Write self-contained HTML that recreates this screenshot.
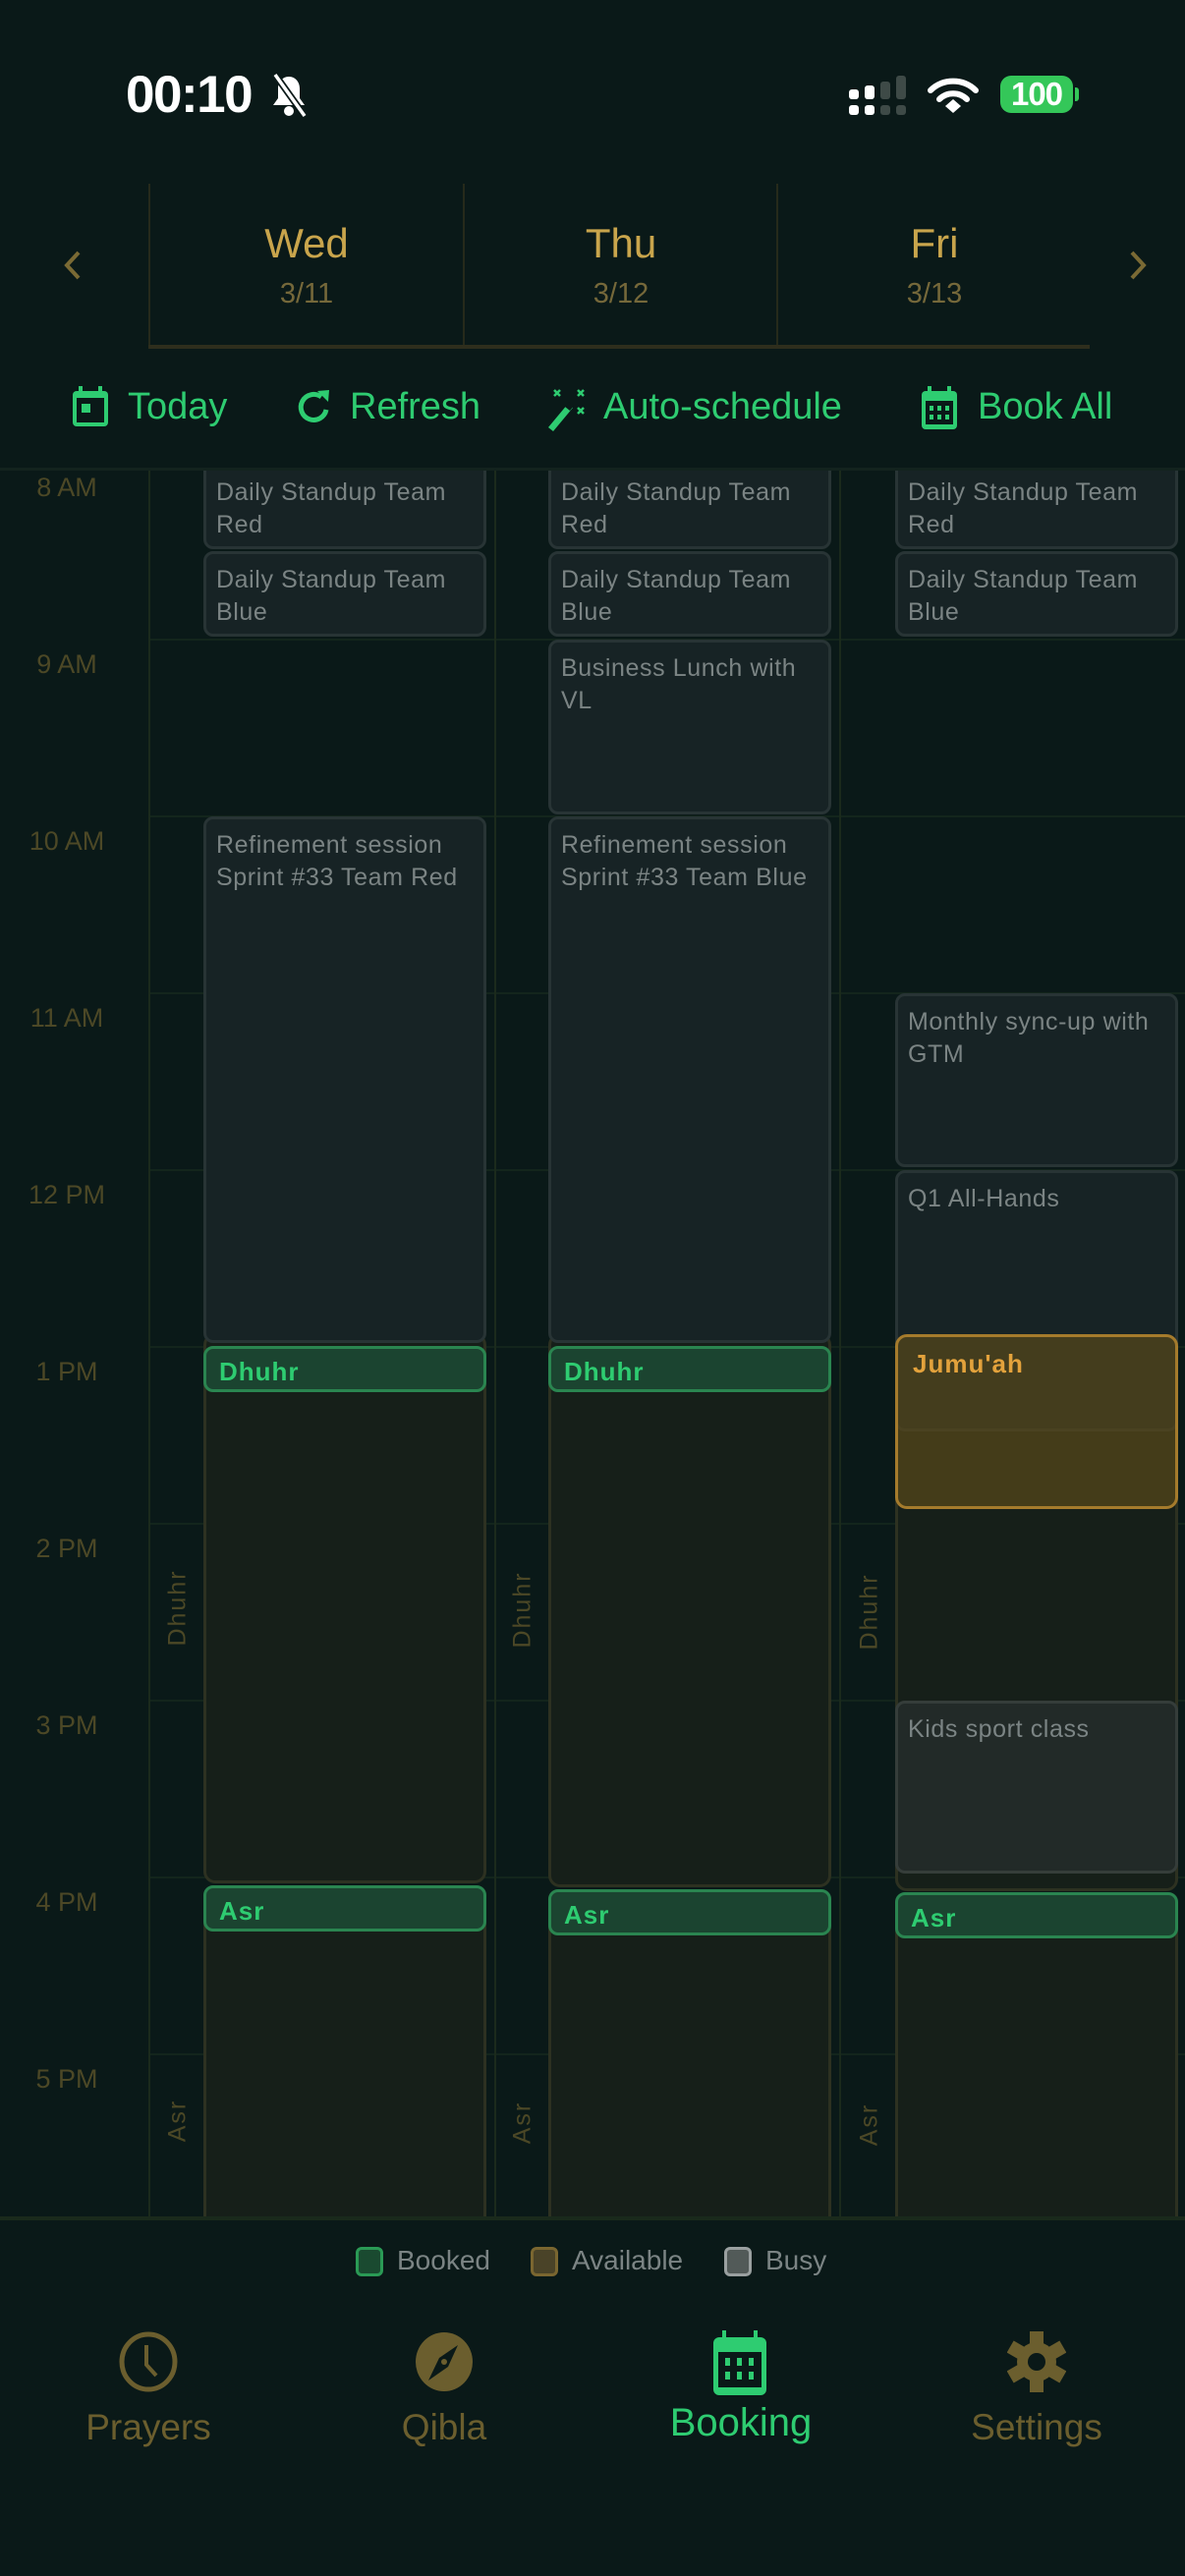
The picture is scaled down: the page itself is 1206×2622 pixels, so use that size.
<!DOCTYPE html>
<html><head><meta charset="utf-8">
<style>
*{margin:0;padding:0;box-sizing:border-box}
body{width:1206px;height:2622px;background:#0a1918;font-family:"Liberation Sans",sans-serif;position:relative;overflow:hidden}
.a{position:absolute}
.day{position:absolute;width:320px;text-align:center}
.dn{font-size:42px;color:#c9a54c;top:224px}
.dd{font-size:29px;color:#75683a;top:283px}
.tb{position:absolute;top:392px;font-size:38px;color:#2ecc71;line-height:44px}
.ev{position:absolute;background:#172325;border:3px solid #283435;border-radius:10px;color:#7b8484;font-size:25px;line-height:33px;padding:10px 10px 0 10px;letter-spacing:0.6px;overflow:hidden;white-space:nowrap}
.av{position:absolute;background:#161f19;border:3px solid #2d3121;border-radius:12px}
.bk{position:absolute;background:#1b4430;border:3px solid #2a8550;border-radius:10px;color:#2ecc71;font-weight:bold;font-size:26px;letter-spacing:1px;padding:8px 0 0 13px;height:47px;width:288px}
.hl{position:absolute;left:152px;width:1054px;height:2px;background:#13251c}
.vl{position:absolute;width:2px;background:#1b2a1c;top:0;height:1780px}
.tl{position:absolute;left:0;width:136px;text-align:center;font-size:27px;color:#4c4826}
.vt{position:absolute;font-size:25px;color:#4c4826;letter-spacing:2px;transform:rotate(-90deg);transform-origin:center;width:100px;text-align:center}
.tab{position:absolute;width:300px;text-align:center;font-size:37px;color:#6b5e2e}
</style></head><body>

<div class="a" style="left:128px;top:66px;font-size:53px;font-weight:bold;color:#fff;letter-spacing:-1.5px">00:10</div>
<svg class="a" style="left:274px;top:74px" width="40" height="46" viewBox="0 0 40 46"><path d="M20 4c-7 0-11 6-11 12v10l-5 7h32l-5-7V16c0-6-4-12-11-12z" fill="#fff"/><circle cx="20" cy="39" r="5" fill="#fff"/><line x1="6" y1="2" x2="36" y2="44" stroke="#0a1918" stroke-width="7"/><line x1="6" y1="2" x2="36" y2="44" stroke="#fff" stroke-width="3.5"/></svg>
<svg class="a" style="left:864px;top:77px" width="60" height="40" viewBox="0 0 60 40"><rect x="0" y="14" width="10" height="10" rx="3" fill="#fff"/><rect x="16" y="10" width="10" height="14" rx="3" fill="#fff"/><rect x="32" y="6" width="10" height="18" rx="3" fill="#3e4a47"/><rect x="48" y="0" width="10" height="24" rx="3" fill="#3e4a47"/><rect x="0" y="30" width="10" height="10" rx="3" fill="#fff"/><rect x="16" y="30" width="10" height="10" rx="3" fill="#fff"/><rect x="32" y="30" width="10" height="10" rx="3" fill="#3e4a47"/><rect x="48" y="30" width="10" height="10" rx="3" fill="#3e4a47"/></svg>
<svg class="a" style="left:944px;top:78px" width="52" height="38" viewBox="0 0 52 38"><path d="M3 14a33 33 0 0 1 46 0" stroke="#fff" stroke-width="6" fill="none" stroke-linecap="round"/><path d="M12 23a20 20 0 0 1 28 0" stroke="#fff" stroke-width="6" fill="none" stroke-linecap="round"/><path d="M18 30l8-7 8 7-8 7z" fill="#fff"/></svg>
<div class="a" style="left:1018px;top:77px;width:74px;height:38px;background:#34c759;border-radius:11px;color:#fff;font-weight:bold;font-size:33px;text-align:center;line-height:38px;letter-spacing:-1px">100</div>
<div class="a" style="left:1094px;top:89px;width:4px;height:14px;background:#34c759;border-radius:0 3px 3px 0"></div>

<svg class="a" style="left:62px;top:254px" width="24" height="32" viewBox="0 0 24 32"><path d="M18 3L6 16l12 13" stroke="#7a6a34" stroke-width="4" fill="none"/></svg>
<svg class="a" style="left:1146px;top:254px" width="24" height="32" viewBox="0 0 24 32"><path d="M6 3l12 13L6 29" stroke="#7a6a34" stroke-width="4" fill="none"/></svg>
<div class="a" style="left:151px;top:187px;width:2px;height:166px;background:#262a1b"></div>
<div class="a" style="left:471px;top:187px;width:2px;height:166px;background:#262a1b"></div>
<div class="a" style="left:790px;top:187px;width:2px;height:166px;background:#262a1b"></div>
<div class="a" style="left:151px;top:351px;width:958px;height:4px;background:#2e2e1d"></div>
<div class="day dn" style="left:152px">Wed</div><div class="day dd" style="left:152px">3/11</div>
<div class="day dn" style="left:472px">Thu</div><div class="day dd" style="left:472px">3/12</div>
<div class="day dn" style="left:791px">Fri</div><div class="day dd" style="left:791px">3/13</div>

<svg class="a" style="left:74px;top:393px" width="36" height="41" viewBox="0 0 36 41"><rect x="6" y="0" width="4" height="6" fill="#2ecc71"/><rect x="26" y="0" width="4" height="6" fill="#2ecc71"/><rect x="0" y="5" width="36" height="36" rx="4" fill="#2ecc71"/><rect x="4" y="12" width="28" height="25" fill="#0a1918"/><rect x="9" y="18" width="9" height="9" fill="#2ecc71"/></svg>
<div class="tb" style="left:130px">Today</div>
<svg class="a" style="left:302px;top:395px" width="36" height="38" viewBox="0 0 36 38"><path d="M30 22A13 13 0 1 1 25 9" stroke="#2ecc71" stroke-width="5" fill="none"/><path d="M21 3l12-1-1 12z" fill="#2ecc71"/></svg>
<div class="tb" style="left:356px">Refresh</div>
<svg class="a" style="left:554px;top:395px" width="44" height="46" viewBox="0 0 44 46"><path d="M4 40l20-24 5 4-20 24z" fill="#2ecc71"/><path d="M21 19l4-5 5 4-4 5z" fill="#0a1918"/><path d="M10 2l6 6M16 2l-6 6M34 2l6 6M40 2l-6 6M34 20l6 6M40 20l-6 6" stroke="#2ecc71" stroke-width="2.5"/></svg>
<div class="tb" style="left:614px">Auto-schedule</div>
<svg class="a" style="left:938px;top:393px" width="36" height="44" viewBox="0 0 36 44"><rect x="6" y="0" width="4" height="7" fill="#2ecc71"/><rect x="26" y="0" width="4" height="7" fill="#2ecc71"/><rect x="0" y="5" width="36" height="39" rx="4" fill="#2ecc71"/><rect x="4" y="15" width="28" height="24" fill="#0a1918"/><g fill="#2ecc71"><rect x="8" y="20" width="4" height="5"/><rect x="16" y="20" width="4" height="5"/><rect x="24" y="20" width="4" height="5"/><rect x="8" y="29" width="4" height="5"/><rect x="16" y="29" width="4" height="5"/><rect x="24" y="29" width="4" height="5"/></g></svg>
<div class="tb" style="left:995px">Book All</div>

<div class="a" style="left:0;top:476px;width:1206px;height:3px;background:#13231e"></div>

<div class="a" style="left:0;top:479px;width:1206px;height:1779px;overflow:hidden">
 <div style="position:absolute;left:0;top:-479px;width:1206px;height:2622px">
  <div class="hl" style="top:470px"></div><div class="hl" style="top:650px"></div><div class="hl" style="top:830px"></div><div class="hl" style="top:1010px"></div><div class="hl" style="top:1190px"></div><div class="hl" style="top:1370px"></div><div class="hl" style="top:1550px"></div><div class="hl" style="top:1730px"></div><div class="hl" style="top:1910px"></div><div class="hl" style="top:2090px"></div>
  <div class="vl" style="left:151px;top:479px"></div><div class="vl" style="left:503px;top:479px"></div><div class="vl" style="left:854px;top:479px"></div>
  <div class="tl" style="top:481px">8 AM</div><div class="tl" style="top:661px">9 AM</div><div class="tl" style="top:841px">10 AM</div><div class="tl" style="top:1021px">11 AM</div><div class="tl" style="top:1201px">12 PM</div><div class="tl" style="top:1381px">1 PM</div><div class="tl" style="top:1561px">2 PM</div><div class="tl" style="top:1741px">3 PM</div><div class="tl" style="top:1921px">4 PM</div><div class="tl" style="top:2101px">5 PM</div>

  <div class="av" style="left:207px;top:1357px;width:288px;height:560px"></div>
  <div class="av" style="left:558px;top:1357px;width:288px;height:564px"></div>
  <div class="av" style="left:911px;top:1357px;width:288px;height:568px"></div>
  <div class="av" style="left:207px;top:1935px;width:288px;height:400px"></div>
  <div class="av" style="left:558px;top:1940px;width:288px;height:400px"></div>
  <div class="av" style="left:911px;top:1945px;width:288px;height:400px"></div>

  <div class="ev" style="left:207px;top:462px;width:288px;height:97px;padding-top:20px">Daily Standup Team<br>Red</div>
  <div class="ev" style="left:207px;top:561px;width:288px;height:87px">Daily Standup Team<br>Blue</div>
  <div class="ev" style="left:207px;top:831px;width:288px;height:536px">Refinement session<br>Sprint #33 Team Red</div>
  <div class="ev" style="left:558px;top:462px;width:288px;height:97px;padding-top:20px">Daily Standup Team<br>Red</div>
  <div class="ev" style="left:558px;top:561px;width:288px;height:87px">Daily Standup Team<br>Blue</div>
  <div class="ev" style="left:558px;top:651px;width:288px;height:178px">Business Lunch with<br>VL</div>
  <div class="ev" style="left:558px;top:831px;width:288px;height:536px">Refinement session<br>Sprint #33 Team Blue</div>
  <div class="ev" style="left:911px;top:462px;width:288px;height:97px;padding-top:20px">Daily Standup Team<br>Red</div>
  <div class="ev" style="left:911px;top:561px;width:288px;height:87px">Daily Standup Team<br>Blue</div>
  <div class="ev" style="left:911px;top:1011px;width:288px;height:177px">Monthly sync-up with<br>GTM</div>
  <div class="ev" style="left:911px;top:1191px;width:288px;height:266px">Q1 All-Hands</div>
  <div class="a" style="left:911px;top:1358px;width:288px;height:178px;background:rgba(88,72,25,0.7);border:3px solid #a57b2c;border-radius:12px;color:#e3a23c;font-weight:bold;font-size:26px;letter-spacing:1px;padding:12px 0 0 15px">Jumu'ah</div>
  <div class="ev" style="left:911px;top:1731px;width:288px;height:176px;background:#222a28;border-color:#353d3a">Kids sport class</div>

  <div class="bk" style="left:207px;top:1370px">Dhuhr</div>
  <div class="bk" style="left:558px;top:1370px">Dhuhr</div>
  <div class="bk" style="left:207px;top:1919px">Asr</div>
  <div class="bk" style="left:558px;top:1923px">Asr</div>
  <div class="bk" style="left:911px;top:1926px">Asr</div>

  <div class="vt" style="left:131px;top:1622px">Dhuhr</div>
  <div class="vt" style="left:482px;top:1624px">Dhuhr</div>
  <div class="vt" style="left:835px;top:1626px">Dhuhr</div>
  <div class="vt" style="left:131px;top:2144px">Asr</div>
  <div class="vt" style="left:482px;top:2146px">Asr</div>
  <div class="vt" style="left:835px;top:2148px">Asr</div>
 </div>
</div>
<div class="a" style="left:0;top:2256px;width:1206px;height:4px;background:#1a2a1c"></div>

<div class="a" style="left:362px;top:2287px;width:28px;height:30px;background:#1a4a30;border:3px solid #2a9a55;border-radius:6px"></div>
<div class="a" style="left:404px;top:2285px;font-size:28px;color:#7b8484">Booked</div>
<div class="a" style="left:540px;top:2287px;width:28px;height:30px;background:#4a4328;border:3px solid #7a6630;border-radius:6px"></div>
<div class="a" style="left:582px;top:2285px;font-size:28px;color:#7b8484">Available</div>
<div class="a" style="left:737px;top:2287px;width:28px;height:30px;background:#525a58;border:3px solid #9aa0a0;border-radius:6px"></div>
<div class="a" style="left:779px;top:2285px;font-size:28px;color:#7b8484">Busy</div>

<svg class="a" style="left:121px;top:2373px" width="60" height="62" viewBox="0 0 60 62"><ellipse cx="30" cy="31" rx="27" ry="28" stroke="#6b5e2e" stroke-width="5" fill="none"/><path d="M28 14v20l10 11" stroke="#6b5e2e" stroke-width="4" fill="none"/></svg>
<div class="tab" style="left:1px;top:2450px">Prayers</div>
<svg class="a" style="left:422px;top:2373px" width="60" height="62" viewBox="0 0 60 62"><ellipse cx="30" cy="31" rx="29" ry="30" fill="#6b5e2e"/><path d="M44 14L34 36 14 50 25 27z" fill="#0a1918"/><circle cx="30" cy="31" r="3" fill="#6b5e2e"/></svg>
<div class="tab" style="left:302px;top:2450px">Qibla</div>
<svg class="a" style="left:726px;top:2372px" width="54" height="66" viewBox="0 0 54 66"><rect x="9" y="0" width="4" height="9" fill="#2ecc71"/><rect x="41" y="0" width="4" height="9" fill="#2ecc71"/><rect x="0" y="7" width="54" height="59" rx="6" fill="#2ecc71"/><rect x="5" y="22" width="44" height="36" fill="#0a1918"/><g fill="#2ecc71"><rect x="12" y="28" width="5" height="8"/><rect x="24" y="28" width="5" height="8"/><rect x="36" y="28" width="5" height="8"/><rect x="12" y="42" width="5" height="8"/><rect x="24" y="42" width="5" height="8"/><rect x="36" y="42" width="5" height="8"/></g></svg>
<div class="tab" style="left:604px;top:2444px;font-size:40px;color:#2ecc71">Booking</div>
<svg class="a" style="left:1025px;top:2373px" width="60" height="62" viewBox="-30 -31 60 62"><g fill="#6b5e2e"><circle r="20"/><rect x="-7" y="-31" width="14" height="14"/><rect x="-7" y="17" width="14" height="14"/><rect x="-7" y="-31" width="14" height="14" transform="rotate(60)"/><rect x="-7" y="17" width="14" height="14" transform="rotate(60)"/><rect x="-7" y="-31" width="14" height="14" transform="rotate(-60)"/><rect x="-7" y="17" width="14" height="14" transform="rotate(-60)"/></g><circle r="9" fill="#0a1918"/></svg>
<div class="tab" style="left:905px;top:2450px">Settings</div>
</body></html>
